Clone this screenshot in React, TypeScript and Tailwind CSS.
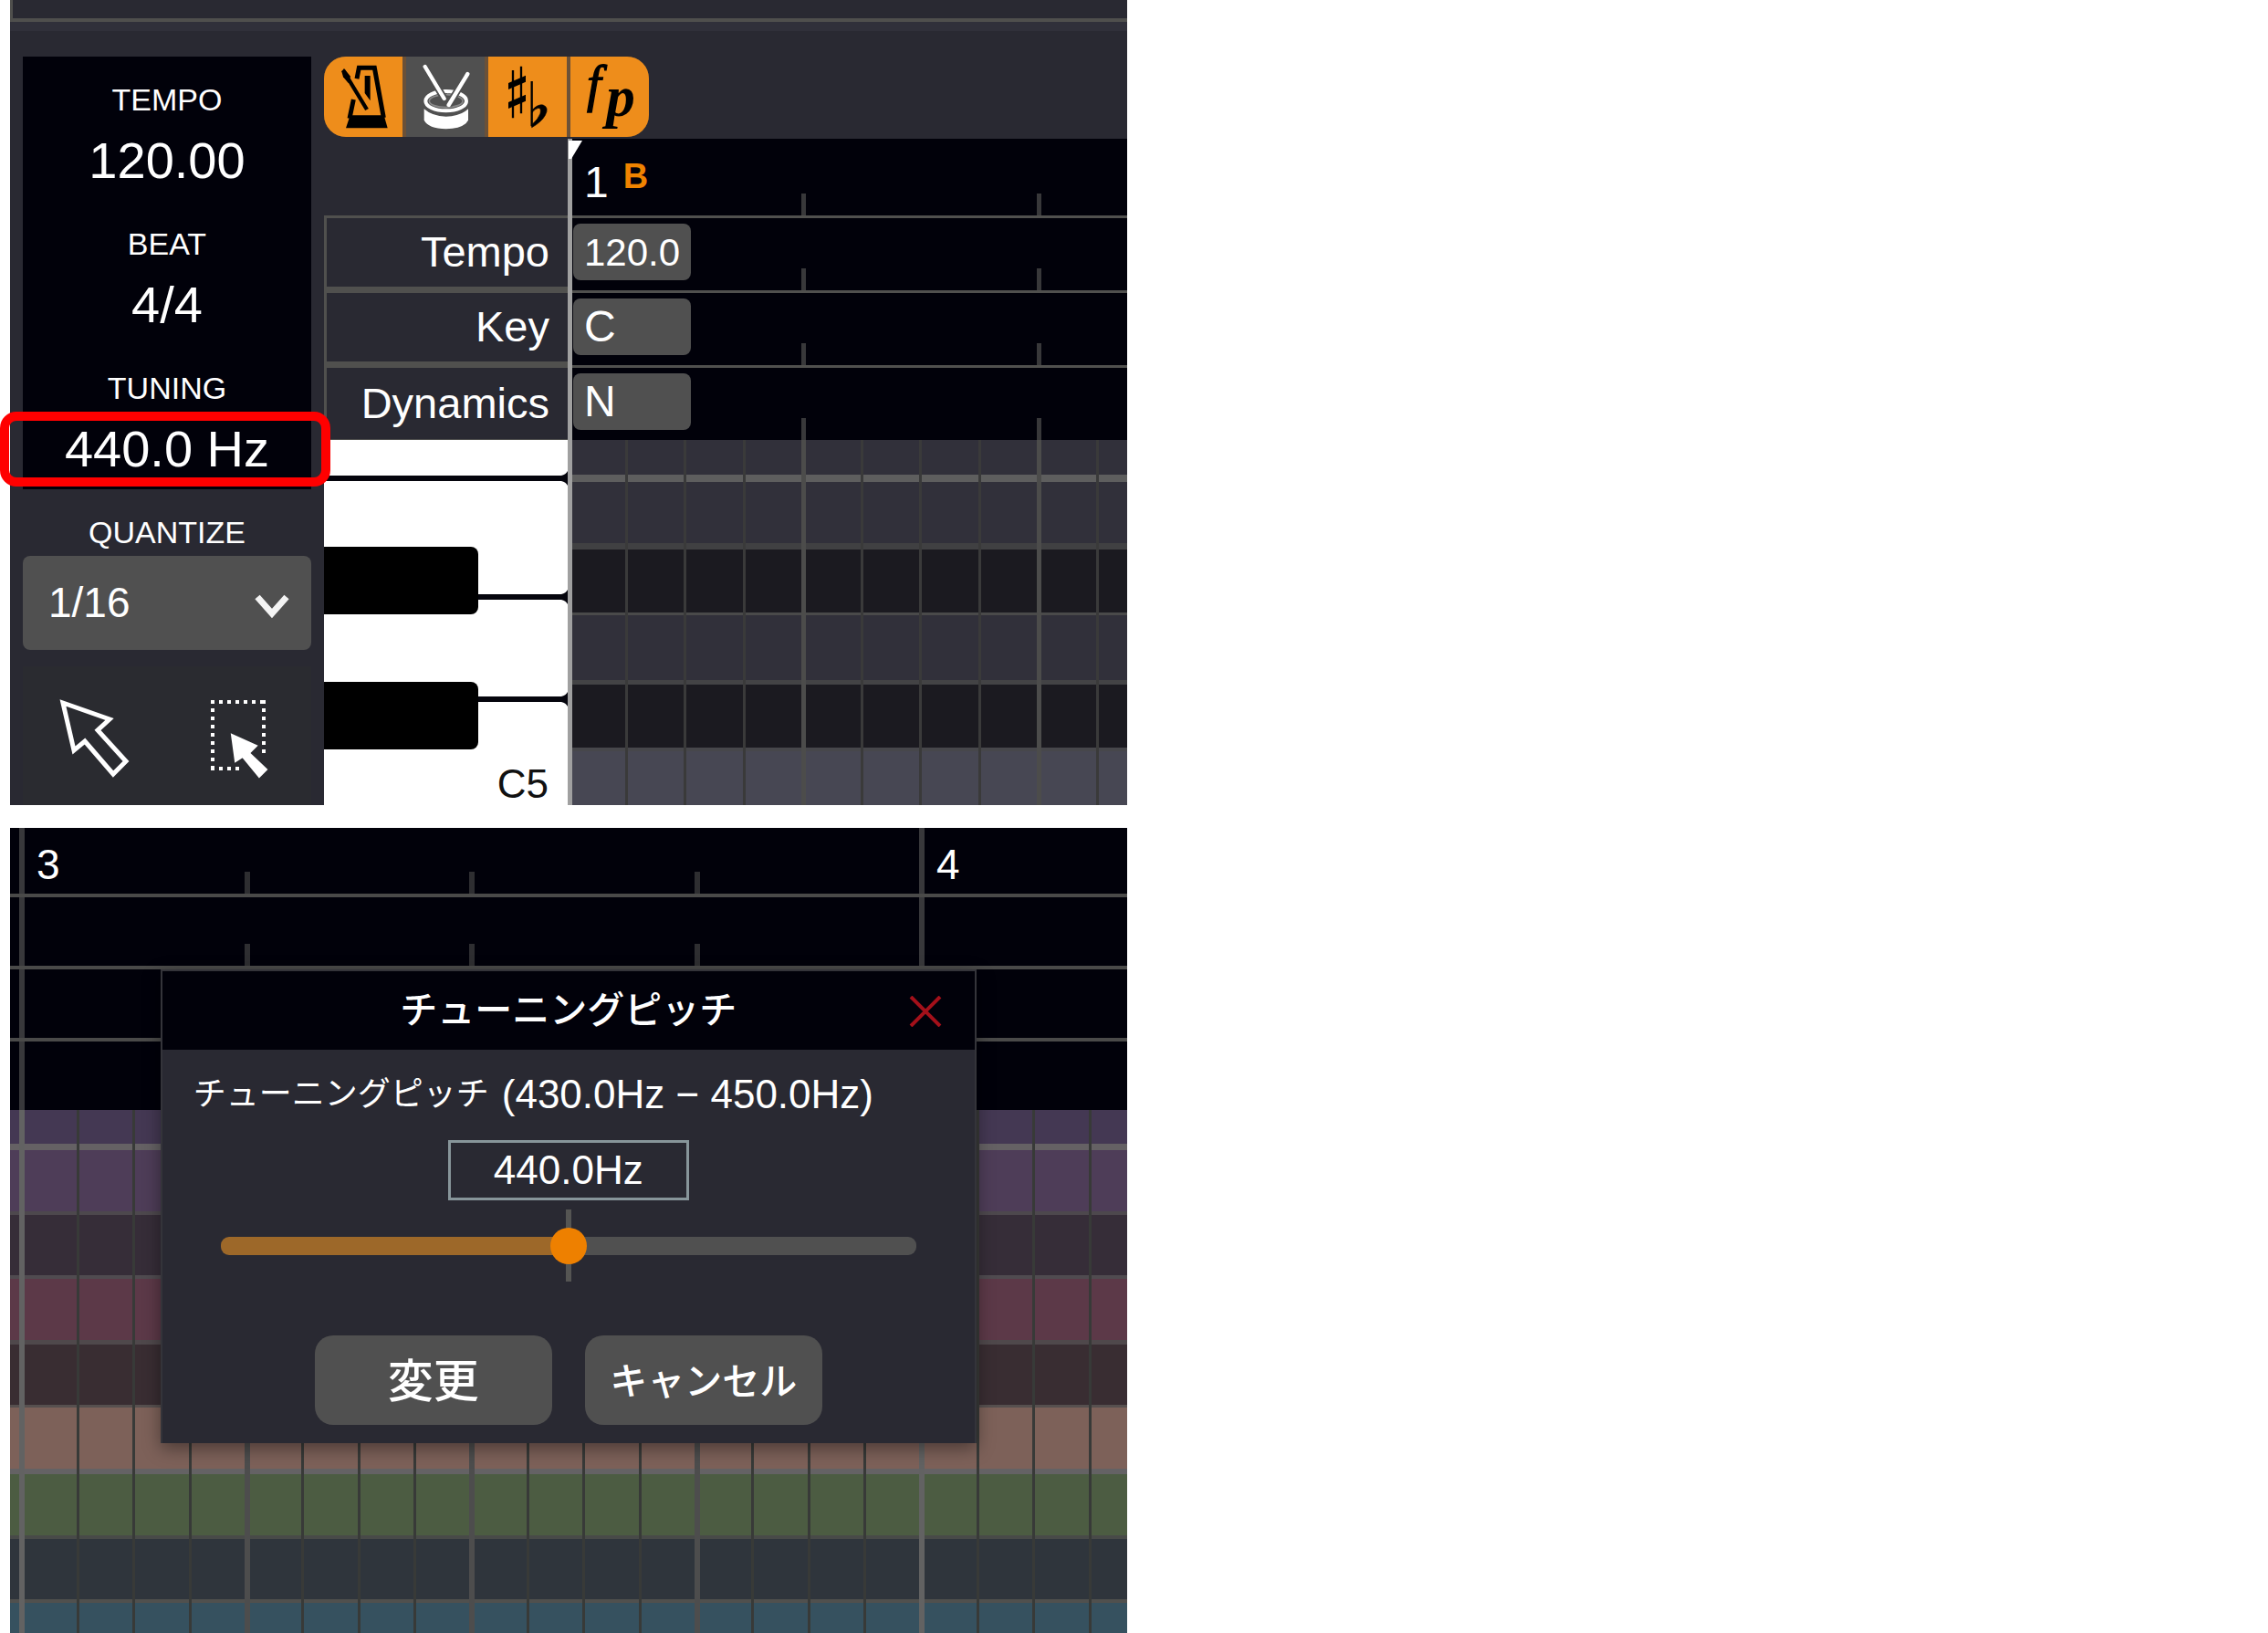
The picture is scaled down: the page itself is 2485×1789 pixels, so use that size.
import { useState } from 'react';
import clsx from 'clsx';

const meters = [
  { label: 'TEMPO', value: '120.00' },
  { label: 'BEAT', value: '4/4' },
  { label: 'TUNING', value: '440.0 Hz', marked: true },
];

const tracks = [
  { label: 'Tempo', value: '120.0', size: 'text-[42px]' },
  { label: 'Key', value: 'C', size: 'text-[48px]' },
  { label: 'Dynamics', value: 'N', size: 'text-[48px]' },
];

const rollRows = [
  'h-[38px] bg-[#31303a]',
  'h-[75px] bg-[#31303a] border-t-[8px] border-[#5e5e5e]',
  'h-[76px] bg-[#1b1a20] border-t-[7px] border-[#404042]',
  'h-[74px] bg-[#31303a] border-t-[3px] border-[#4a4a4a]',
  'h-[74px] bg-[#1b1a20] border-t-[5px] border-[#434345]',
  'h-[63px] bg-[#474753] border-t-4 border-[#47474b]',
];

const colorRows = [
  'h-[37px] bg-[#443853]',
  'h-[74px] bg-[#4e3d58] border-t-[7px] border-[#656164]',
  'h-[70px] bg-[#362d38] border-t-4 border-[#4d484d]',
  'h-[71px] bg-[#5c3948] border-t-4 border-[#504b50]',
  'h-[71px] bg-[#392d32] border-t-[5px] border-[#4f484b]',
  'h-[70px] bg-[#7d6159] border-t-[3px] border-[#57504f]',
  'h-[73px] bg-[#4c5c42] border-t-[6px] border-[#646264]',
  'h-[70px] bg-[#2f353c] border-t-4 border-[#484a48]',
  'h-[37px] bg-[#36515f] border-t-4 border-[#50504e]',
];

function MetronomeIcon() {
  return (
    <svg viewBox="45 67 258 264" className="h-full w-full" aria-hidden="true">
      <path d="M153 140 L160 104 H211 L241 268 M142 208 L129 270" fill="none" stroke="#000" strokeWidth="15" />
      <path d="M131 260 H242 L254 302 H117 Z" />
      <path d="M179 130 H197 V212 L179 187 Z" />
      <path d="M108 112 L186 241" stroke="#000" strokeWidth="13" />
      <path d="M103 116 L111 106 L132 132 L125 154 L108 134 Z" />
    </svg>
  );
}

function DrumIcon() {
  return (
    <svg viewBox="315 67 258 264" className="h-full w-full" aria-hidden="true">
      <ellipse cx="446" cy="213" rx="67" ry="32" fill="none" stroke="#fff" strokeWidth="12" />
      <ellipse cx="446" cy="213" rx="55" ry="21" fill="none" stroke="#8a8a8a" strokeWidth="5" />
      <path d="M377 100 L440 205 M517 124 L455 226" stroke="#505050" strokeWidth="24" />
      <path d="M377 100 L440 205 M517 124 L455 226" stroke="#fff" strokeWidth="13" strokeLinecap="round" />
      <circle cx="452" cy="183" r="5" fill="#fff" />
      <path d="M374 239 Q400 263 446 264 Q492 263 519 239 V276 Q505 303 446 305 Q388 303 374 276 Z" fill="#fff" />
    </svg>
  );
}

function AccidentalIcon() {
  return (
    <svg viewBox="585 67 258 264" className="h-full w-full" aria-hidden="true">
      <path d="M666 112 V269 M693 99 V254" stroke="#000" strokeWidth="7" />
      <path d="M653 155 V172 L706 149 V132 Z M653 218 V235 L706 212 V195 Z" stroke="#000" strokeWidth="4" />
      <path d="M728 148 V296" stroke="#000" strokeWidth="7" />
      <path d="M728 244 Q748 222 765 226 Q786 234 772 260 Q760 282 728 300 V291 Q750 272 756 254 Q760 236 750 236 Q740 237 728 252 Z" stroke="#000" strokeWidth="2" />
    </svg>
  );
}

function DynamicsIcon() {
  return (
    <svg viewBox="858 67 258 264" className="h-full w-full font-['Liberation_Serif',serif] italic" aria-hidden="true">
      <text x="912" y="214" fontSize="168" stroke="#000" strokeWidth="4">f</text>
      <text x="976" y="262" fontSize="190" className="font-bold">p</text>
    </svg>
  );
}

const toggles = [
  { label: 'Metronome', icon: <MetronomeIcon />, on: true },
  { label: 'Drum', icon: <DrumIcon />, on: false },
  { label: 'Key', icon: <AccidentalIcon />, on: true },
  { label: 'Dynamics', icon: <DynamicsIcon />, on: true },
];

// Short marks at the foot of a ruler lane, one per beat
function RollTicks() {
  return (
    <div className="pointer-events-none absolute bottom-0 -left-[7px] flex h-6">
      {[0, 1, 2].map((i) => (
        <div key={i} className={clsx('w-[258px] shrink-0', i > 0 && 'border-l-[5px] border-[#38383a]')} />
      ))}
    </div>
  );
}

function MeasureTicks() {
  return (
    <div className="pointer-events-none absolute bottom-0 left-[10px] grid h-6 w-[986px] grid-cols-4">
      {[0, 1, 2, 3].map((i) => (
        <div key={i} className={clsx(i > 0 && 'border-l-[6px] border-[#2e2e31]')} />
      ))}
    </div>
  );
}

function RollLines() {
  return (
    <div className="pointer-events-none absolute inset-y-0 -left-[7px] flex">
      {[0, 1, 2].map((beat) => (
        <div key={beat} className="grid w-[258px] shrink-0 grid-cols-4">
          {[0, 1, 2, 3].map((i) => (
            <div
              key={i}
              className={clsx(
                i > 0 && 'border-l-[3px] border-[#3a3a3a]',
                i === 0 && beat > 0 && 'border-l-[5px] border-[#4c4c4b]',
              )}
            />
          ))}
        </div>
      ))}
    </div>
  );
}

function MeasureLines() {
  return (
    <div className="pointer-events-none absolute inset-y-0 left-[10px] flex">
      {[0, 1].map((m) => (
        <div key={m} className="grid w-[986px] shrink-0 grid-cols-16">
          {Array.from({ length: 16 }, (_, i) => (
            <div
              key={i}
              className={clsx(
                i === 0 && 'border-l-[6px] border-[#626262]',
                i > 0 && i % 4 === 0 && 'border-l-[6px] border-[#4d4d4d]',
                i % 4 !== 0 && 'ml-px border-l-[3px] border-[#383a38]',
              )}
            />
          ))}
        </div>
      ))}
    </div>
  );
}

function Sidebar() {
  return (
    <aside className="flex w-[316px] shrink-0 flex-col">
      <dl className="bg-[#01010a]">
        {meters.map((m) => (
          <div key={m.label} className="relative flex h-[158px] flex-col items-center pt-[27px]">
            <dt className="text-[34px] leading-10">{m.label}</dt>
            <dd className="mt-[15px] text-[56px] leading-[64px]">{m.value}</dd>
            {m.marked && (
              <div className="absolute -left-[25px] top-[73px] z-10 h-[82px] w-[362px] rounded-[18px] border-[10px] border-[#ff0000]" />
            )}
          </div>
        ))}
      </dl>

      <label htmlFor="quantize" className="mt-[27px] text-center text-[34px] leading-10">QUANTIZE</label>
      <div className="relative mt-[6px]">
        <select
          id="quantize"
          className="h-[103px] w-full appearance-none rounded-[8px] bg-[#505050] pl-[28px] text-[46px] text-white"
        >
          <option>1/16</option>
        </select>
        <svg viewBox="0 0 44 30" className="pointer-events-none absolute right-[21px] top-[40px] h-[30px] w-[44px]" aria-hidden="true">
          <path d="M6 5 L22 23 L38 5" fill="none" stroke="#f4f4f4" strokeWidth="7" />
        </svg>
      </div>

      <div className="mt-[18px] grid flex-1 grid-cols-2 bg-[#2a2b30]">
        <button aria-label="Select" className="flex items-start justify-center pt-[34px]">
          <svg viewBox="63 764 82 92" className="h-[92px] w-[82px]" aria-hidden="true">
            <path d="M69 770 L120 788 L107 800 L138 834 L124 848 L93 812 L81 822 Z" fill="none" stroke="#fff" strokeWidth="5" />
          </svg>
        </button>
        <button aria-label="Range select" className="flex items-start justify-center pt-[34px]">
          <svg viewBox="221 764 82 92" className="h-[92px] w-[82px]" aria-hidden="true">
            <path d="M233 767 V844 M231 769 H291 M289 767 V828 M231 842 H264" fill="none" stroke="#fff" strokeWidth="4" strokeDasharray="4 5" />
            <path d="M254 805 L281 817 L273 825 L292 843 L284 851 L266 829 L258 834 Z" fill="#fff" stroke="#fff" strokeWidth="2" />
          </svg>
        </button>
      </div>
    </aside>
  );
}

function Piano() {
  return (
    <div className="relative h-[400px] w-[267px] shrink-0 bg-white">
      <svg viewBox="0 0 267 400" className="absolute inset-0 h-full w-full" aria-hidden="true">
        {[42, 172, 284].map((y) => (
          <path
            key={y}
            d={`M0 ${y - 3} H260 Q265 ${y - 4} 267 ${y - 8} V${y + 8} Q265 ${y + 4} 260 ${y + 3} H0 Z`}
            fill="#05050d"
          />
        ))}
        <rect x="-10" y="117" width="179" height="74" rx="8" />
        <rect x="-10" y="265" width="179" height="74" rx="8" />
      </svg>
      <span className="absolute bottom-0 right-[21px] text-[44px] leading-[46px] text-[#111]">C5</span>
    </div>
  );
}

function Editor() {
  return (
    <section className="bg-[#292932]">
      <div className="h-[24px] border-b-4 border-l-[3px] border-[#4f4f4d]" />
      <div className="h-[10px] bg-[#30303a]" />
      <div className="flex gap-[14px] pl-[14px] pt-[28px]">
        <Sidebar />
        <div className="min-w-0 flex-1">
          <div className="flex h-[88px] w-[356px] gap-1 overflow-hidden rounded-[24px] bg-[#6b5138]">
            {toggles.map((t) => (
              <button
                key={t.label}
                aria-label={t.label}
                aria-pressed={t.on}
                className={clsx('w-[86px]', t.on ? 'bg-[#ee8d1b]' : 'bg-[#505050]')}
              >
                {t.icon}
              </button>
            ))}
          </div>

          <div className="mt-[2px] flex">
            <div className="w-[267px] shrink-0">
              <div className="h-[84px]" />
              {tracks.map((t) => (
                <div
                  key={t.label}
                  className="flex h-[82px] items-center justify-end border-b-4 border-l-[3px] border-t-[3px] border-[#50504e] pr-[20px] text-[47px] last:border-b"
                >
                  {t.label}
                </div>
              ))}
            </div>

            <div className="relative min-w-0 flex-1 border-l-[5px] border-[#a0a0a0] bg-[#01010a]">
              <svg viewBox="0 0 15 20" className="absolute -left-[4px] top-[2px] z-10 h-5 w-[15px]" aria-hidden="true">
                <path d="M0 0 H15 L3 20 H0 Z" fill="#fff" />
              </svg>
              <div className="relative flex h-[84px] overflow-x-clip pl-[13px]">
                <span className="mt-[21px] text-[48px] leading-[54px]">1</span>
                <span className="ml-[16px] mt-[19px] text-[38px] font-bold leading-[44px] text-[#f08300]">B</span>
                <RollTicks />
              </div>
              {tracks.map((t) => (
                <div key={t.label} className="relative h-[82px] overflow-x-clip border-t-[3px] border-[#50504e] pl-px pt-[6px]">
                  <div className={clsx('flex h-[62px] w-[129px] items-center rounded-[8px] bg-[#505050] pl-[12px]', t.size)}>
                    {t.value}
                  </div>
                  <RollTicks />
                </div>
              ))}
            </div>
          </div>

          <div className="flex">
            <Piano />
            <div className="relative min-w-0 flex-1 overflow-hidden border-l-[5px] border-[#a0a0a0]">
              {rollRows.map((row, i) => (
                <div key={i} className={row} />
              ))}
              <RollLines />
            </div>
          </div>
        </div>
      </div>
    </section>
  );
}

function TuningDialog() {
  const [pitch, setPitch] = useState(440);
  const fill = ((pitch - 430) / 20) * 100;

  return (
    <div
      role="dialog"
      aria-labelledby="tuning-title"
      className="absolute left-1/2 top-[155px] w-[894px] max-w-full -translate-x-1/2 border-2 border-b-0 border-[#34343a] bg-[#292932] shadow-[0_6px_18px_rgba(0,0,0,0.4)]"
    >
      <div className="relative flex h-[86px] items-center justify-center bg-[#01010a]">
        <h2 id="tuning-title" className="text-[41px] font-medium leading-[60px]">チューニングピッチ</h2>
        <button aria-label="Close" className="absolute right-[29px] top-[21px] flex h-[46px] w-[50px] items-center justify-center">
          <svg viewBox="0 0 36 34" className="h-[34px] w-[36px]" aria-hidden="true">
            <path d="M2 1 L34 33 M34 1 L2 33" stroke="#a3101a" strokeWidth="4" />
          </svg>
        </button>
      </div>

      <div className="flex flex-col pb-5">
        <label htmlFor="pitch" className="mt-[25px] flex items-center gap-[14px] pl-[34px] leading-[48px]">
          <span className="text-[36px]">チューニングピッチ</span>
          <span className="text-[44px]">(430.0Hz − 450.0Hz)</span>
        </label>
        <input
          id="pitch"
          type="text"
          readOnly
          value={`${pitch.toFixed(1)}Hz`}
          className="mt-[26px] h-[66px] w-[264px] self-center border-[3px] border-[#87959a] text-center text-[44px] leading-[48px] outline-none"
        />
        <div className="relative mx-16 mt-[10px] flex h-[79px] items-center">
          <div className="absolute left-1/2 h-[79px] w-[6px] -translate-x-1/2 bg-[#555553]" />
          <input
            type="range"
            aria-label="チューニングピッチ"
            min={430}
            max={450}
            step={0.1}
            value={pitch}
            onChange={(e) => setPitch(Number(e.target.value))}
            style={{ '--fill': `${fill}%` } as React.CSSProperties}
            className="relative h-10 w-full appearance-none bg-transparent outline-none [&::-webkit-slider-runnable-track]:h-5 [&::-webkit-slider-runnable-track]:rounded-[9px] [&::-webkit-slider-runnable-track]:bg-[linear-gradient(to_right,#9d6829_var(--fill),#505050_var(--fill))] [&::-webkit-slider-thumb]:-mt-[10px] [&::-webkit-slider-thumb]:size-10 [&::-webkit-slider-thumb]:appearance-none [&::-webkit-slider-thumb]:rounded-full [&::-webkit-slider-thumb]:bg-[#ee8000]"
          />
        </div>
        <div className="mt-[59px] flex justify-center gap-9">
          <button className="h-[98px] w-[260px] rounded-[20px] bg-[#505050] pt-1 text-[50px] font-medium leading-[60px]">変更</button>
          <button className="h-[98px] w-[260px] rounded-[20px] bg-[#505050] pt-1 text-[41px] font-medium leading-[60px]">キャンセル</button>
        </div>
      </div>
    </div>
  );
}

function Timeline() {
  return (
    <section className="relative overflow-hidden bg-[#01010a]">
      <div className="relative">
        <div className="pointer-events-none absolute inset-y-0 left-[10px] flex">
          <div className="w-[986px] shrink-0 border-l-[6px] border-[#38383b]" />
          <div className="border-l-[6px] border-[#38383b]" />
        </div>
        <div className="relative flex h-[72px] pl-[29px] text-[46px] leading-[80px]">
          <span className="w-[986px] shrink-0">3</span>
          <span>4</span>
          <MeasureTicks />
        </div>
        {[0, 1, 2].map((i) => (
          <div key={i} className="relative h-[79px] border-t-4 border-[#4a4a49]">
            <MeasureTicks />
          </div>
        ))}
      </div>
      <div className="relative">
        {colorRows.map((row, i) => (
          <div key={i} className={row} />
        ))}
        <MeasureLines />
      </div>
      <TuningDialog />
    </section>
  );
}

export default function App() {
  return (
    <main className="min-h-screen overflow-hidden bg-white font-['Liberation_Sans','Noto_Sans_CJK_JP',sans-serif] text-white">
      <div className="flex w-1/2 flex-col gap-[25px] pl-[11px] pr-2">
        <Editor />
        <Timeline />
      </div>
    </main>
  );
}
